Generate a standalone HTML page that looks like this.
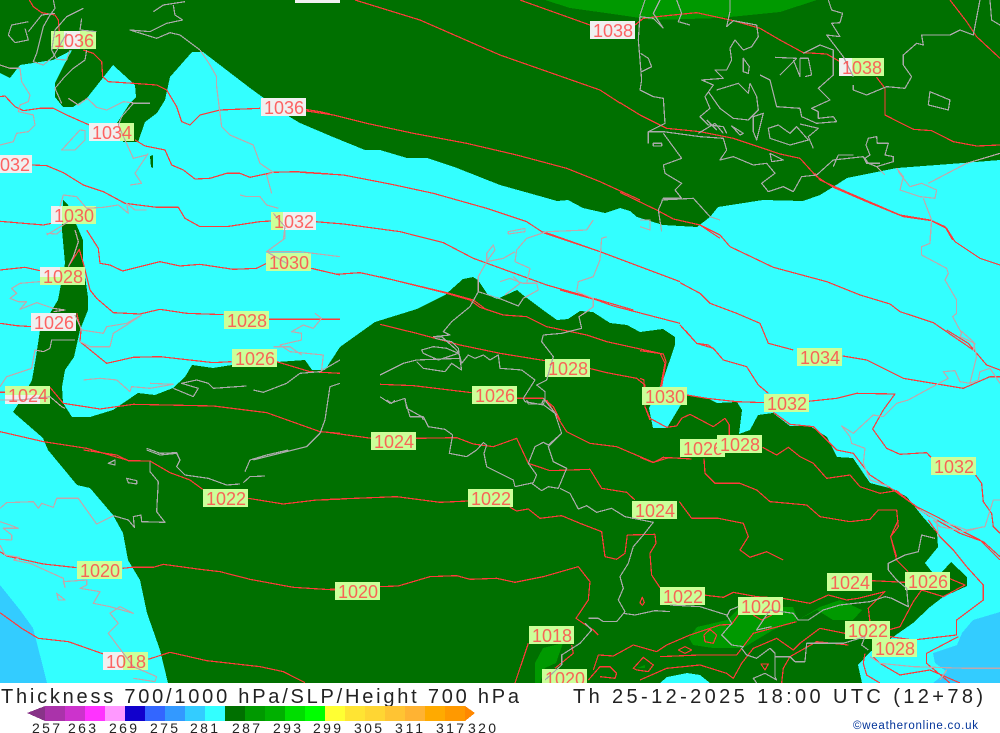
<!DOCTYPE html>
<html><head><meta charset="utf-8"><title>Thickness</title>
<style>
html,body{margin:0;padding:0;background:#fff;width:1000px;height:733px;overflow:hidden}
svg{display:block}
.r path{fill:none;stroke:#ff3a3a;stroke-width:3.6;stroke-linejoin:round}
.g path{fill:none;stroke:#aaa;stroke-width:3.6;stroke-linejoin:round}
.p path{fill:none;stroke:#c0a8ac;stroke-width:3.6;stroke-linejoin:round}
.l text{font-family:"Liberation Sans",sans-serif;font-size:18px;fill:#ff4a4a;fill-opacity:.85}
.t text{font-family:"Liberation Sans",sans-serif;font-size:20px;fill:#222}
.k text{font-family:"Liberation Sans",sans-serif;font-size:14px;fill:#222}
</style></head><body>
<svg width="1000" height="733" viewBox="0 0 1000 733" xmlns="http://www.w3.org/2000/svg">
<rect width="1000" height="733" fill="#fff"/>
<g shape-rendering="crispEdges">
<rect width="1000" height="683" fill="#33ffff"/>
<path fill="#33ccff" d="M0,585 L20,610 33,628 42,663 47,683 0,683Z"/>
<path fill="#33ccff" d="M1000,612 L973,620 962,633 957,645 933,653 935,663 947,672 933,683 1000,683Z"/>
<path fill="#007000" d="M0,0 L1000,0 1000,160 963,163 897,168 847,178 833,187 820,195 803,201 763,200 718,207 710,217 697,227 663,225 637,217 630,211 620,208 605,213 583,208 568,200 557,201 543,197 500,185 457,168 427,158 407,158 380,150 365,150 333,137 300,123 290,117 250,88 203,52 192,52 170,77 165,100 157,113 145,122 138,142 123,142 117,123 130,103 136,97 135,85 113,65 87,98 73,107 63,107 55,97 55,83 63,67 72,50 53,60 33,63 20,65 10,78 0,73Z"/>
<path fill="#007000" d="M150,156 L153,155 153,168 151,167Z"/>
<path fill="#009900" d="M545,0 L570,8 620,15 653,20 720,18 780,12 817,0Z"/>
<path fill="#007000" d="M63,200 L68,205 83,240 83,263 88,297 88,310 80,330 74,357 65,370 62,387 63,403 72,417 90,417 113,410 138,393 155,395 173,388 185,377 192,365 213,368 232,365 277,362 305,360 312,370 325,370 340,347 375,322 417,309 445,295 463,279 473,277 478,280 488,295 497,299 517,290 523,295 543,310 557,320 568,319 580,311 593,312 610,323 627,325 640,332 663,329 675,337 675,345 663,380 649,408 653,428 667,428 682,403 687,395 707,398 717,403 737,402 742,410 739,434 750,430 758,415 773,413 790,426 810,426 827,437 837,457 853,458 870,483 893,489 907,497 923,517 937,533 938,547 925,563 932,572 942,572 951,562 967,577 967,586 943,597 930,607 913,623 893,637 870,652 858,665 862,683 710,683 700,675 687,673 667,677 660,683 168,683 160,650 147,613 140,580 128,560 123,533 113,515 90,488 77,485 48,450 43,438 13,412 23,397 32,380 36,357 40,330 58,300 65,263 62,230Z"/>
<path fill="#009900" d="M535,683 L535,663 543,648 563,643 556,663 545,668 540,683Z"/>
<path fill="#009900" d="M689,638 L697,627 727,620 740,607 793,607 798,620 773,630 743,648 713,648 693,645Z"/>
<path fill="#009900" d="M798,620 L820,607 840,600 862,610 853,620 833,620 817,610Z"/>
<path fill="#009900" d="M637,668 L645,665 645,668Z"/>
</g>

<g shape-rendering="crispEdges">
<g class="r">
<path transform="scale(.3333)" d="M88,0 L100,20 125,38 165,45 175,60 178,95"/>
<path transform="scale(.3333)" d="M250,150 L280,160 305,185 308,230 325,245 400,250 470,255 500,270 530,320 545,365 570,375 600,345 660,330 780,325"/>
<path transform="scale(.3333)" d="M915,328 L960,335 990,342"/>
<path transform="scale(.3333)" d="M0,290 L15,288 45,320 70,332 120,325 160,325 200,345 268,375"/>
<path transform="scale(.3333)" d="M405,420 L435,438 495,450 515,495 550,510 585,537 630,535 680,520 720,520 750,532 820,517 890,515 990,522"/>
<path transform="scale(.3333)" d="M95,495 L140,497 190,518 250,555 310,575 375,610 470,622 535,622 555,655 600,680 680,680 780,665 815,663"/>
<path transform="scale(.3333)" d="M0,664 L130,675 155,670"/>
<path transform="scale(.3333)" d="M1065,0 L1260,60 1500,165 1800,270 1860,309 M1560,0 L1770,75"/>
<path transform="translate(300,90) scale(.3333)" d="M0,60 L100,75 200,100 340,130 500,160 650,195 800,235 900,275 1020,330"/>
<path transform="translate(300,90) scale(.3333)" d="M0,247 L130,255 270,282 400,310 560,355 680,395 730,428 900,485 1020,530"/>
<path transform="translate(300,90) scale(.3333)" d="M45,395 L130,402 300,425 430,458 520,505 630,545 740,585 880,625 1000,660"/>
<path transform="translate(300,90) scale(.3333)" d="M35,535 L110,553 180,548 280,570 440,608 520,630 560,660"/>
<path transform="translate(380,220) scale(.3333)" d="M490,35 L660,95 900,185"/>
<path transform="translate(380,220) scale(.3333)" d="M540,210 L650,240 700,258 900,310"/>
<path transform="translate(620,0) scale(.3333)" d="M45,75 L70,55 130,48 230,38 340,62 420,85 480,120 550,158 620,162 660,185"/>
<path transform="translate(620,0) scale(.3333)" d="M770,232 L795,265 795,345 880,388 935,392 1000,425 1070,438 1140,435"/>
<path transform="translate(620,0) scale(.3333)" d="M990,0 L1040,65 1070,110 1140,175"/>
<path transform="translate(620,0) scale(.3333)" d="M0,308 L60,345 140,385 240,395 340,415 480,462 540,475 590,530 640,562 740,605 850,650 935,662 975,680 998,720"/>
<path transform="translate(620,0) scale(.3333)" d="M0,577 L110,630 160,657 240,675 300,715"/>
<path transform="translate(680,130) scale(.3333)" d="M405,130 L420,150 505,188 660,255 750,270 800,295 825,335 900,385 960,405"/>
<path transform="translate(680,130) scale(.3333)" d="M60,285 L120,315 150,350 280,412 440,455 540,495 630,522 660,545 760,578 880,660"/>
<path transform="translate(680,130) scale(.3333)" d="M0,458 L60,490 90,520 170,550 240,580 265,640 340,660"/>
<path transform="translate(680,130) scale(.3333)" d="M0,585 L50,640 85,645 105,660"/>
<path transform="translate(640,330) scale(.3333)" d="M920,0 L985,40 1040,105 1080,120"/>
<path transform="translate(640,330) scale(.3333)" d="M608,78 L680,90 790,145 970,175 1050,140 1080,140"/>
<path transform="translate(640,330) scale(.3333)" d="M135,0 L170,40 220,55 250,90 320,110 355,165 385,190"/>
<path transform="translate(640,330) scale(.3333)" d="M0,62 L70,72 78,95 65,170"/>
<path transform="translate(640,330) scale(.3333)" d="M0,145 L12,150 15,230 30,265 80,292 110,288 125,265 150,253 220,290 255,265 268,285 268,315"/>
<path transform="translate(640,330) scale(.3333)" d="M140,195 L200,205 290,215 372,218"/>
<path transform="translate(640,330) scale(.3333)" d="M400,247 L450,283 520,290 590,360 640,370 690,435 760,480 830,530 890,560 970,605 1020,630 1080,690"/>
<path transform="translate(640,330) scale(.3333)" d="M505,214 L590,205 650,190 765,192 730,240 698,297 740,355 780,373 860,368 873,382"/>
<path transform="translate(640,330) scale(.3333)" d="M1005,433 L1025,460 1030,515 1055,550 1060,590 1080,610"/>
<path transform="translate(640,330) scale(.3333)" d="M368,352 L410,375 445,352 480,380 520,400 560,445 630,435 660,470 720,490 770,482 840,540 870,560"/>
<path transform="translate(640,330) scale(.3333)" d="M0,382 L40,398 70,382 155,387"/>
<path transform="translate(640,330) scale(.3333)" d="M192,385 L195,430 225,460 300,460 350,480 390,515 500,525 540,560 630,575 690,568 715,540 770,540 775,590 752,620 770,680"/>
<path transform="translate(640,330) scale(.3333)" d="M118,515 L155,565 235,565 310,580 325,620 300,660 330,682 380,665 430,690"/>
<path transform="translate(380,220) scale(.3333)" d="M0,170 L80,190 200,220 270,240 300,262 370,285 440,290 500,320 620,345 680,365 840,400 855,430 840,510"/>
<path transform="translate(380,220) scale(.3333)" d="M0,313 L110,340 240,375 360,400 495,422"/>
<path transform="translate(380,220) scale(.3333)" d="M627,445 L680,458 770,475 795,495 795,560 810,600"/>
<path transform="translate(380,220) scale(.3333)" d="M0,493 L100,497 275,518"/>
<path transform="translate(380,220) scale(.3333)" d="M410,535 L490,535 520,560 540,600"/>
<path transform="translate(0,230) scale(.3333)" d="M0,120 L75,112 120,122"/>
<path transform="translate(0,230) scale(.3333)" d="M260,0 L295,55 300,100 330,105 368,123 480,95 540,108 600,103 700,118 770,115 800,100"/>
<path transform="translate(0,230) scale(.3333)" d="M933,115 L1020,135"/>
<path transform="translate(0,230) scale(.3333)" d="M205,110 L238,58 250,100 270,180 290,205 340,248 420,252 480,238 560,250 670,254"/>
<path transform="translate(0,230) scale(.3333)" d="M805,268 L1020,268"/>
<path transform="translate(0,230) scale(.3333)" d="M0,280 L50,287 95,290"/>
<path transform="translate(0,230) scale(.3333)" d="M230,250 L243,300 240,335 320,400 400,382 480,380 640,398 695,395"/>
<path transform="translate(0,230) scale(.3333)" d="M830,395 L930,425 1020,430"/>
<path transform="translate(0,230) scale(.3333)" d="M0,487 L15,487 M150,472 L190,520 300,537 400,523 640,528 800,548 960,605 1020,610"/>
<path transform="translate(0,230) scale(.3333)" d="M0,605 L130,635 260,655 380,690"/>
<path transform="translate(0,450) scale(.3333)" d="M250,0 L350,15 385,32 450,33 510,68 570,90 608,118"/>
<path transform="translate(0,450) scale(.3333)" d="M745,145 L850,162 950,150 1020,148"/>
<path transform="translate(0,450) scale(.3333)" d="M0,305 L20,318 130,342 230,353"/>
<path transform="translate(0,450) scale(.3333)" d="M368,355 L395,352 460,352 490,343 600,358 660,365 750,388 880,412 1005,420"/>
<path transform="translate(0,450) scale(.3333)" d="M0,488 L65,535 115,565 205,575 310,612"/>
<path transform="translate(0,450) scale(.3333)" d="M445,628 L510,607 620,632 780,650 850,665 915,698"/>
<path transform="translate(330,400) scale(.3333)" d="M0,98 L125,115"/>
<path transform="translate(330,400) scale(.3333)" d="M258,115 L380,113 430,132 490,140 560,115 595,190 660,212 780,208 815,265 890,277 915,300"/>
<path transform="translate(330,400) scale(.3333)" d="M650,0 L710,95 780,130 860,140 970,187 1020,172"/>
<path transform="translate(330,400) scale(.3333)" d="M0,298 L200,290 330,307 415,303"/>
<path transform="translate(330,400) scale(.3333)" d="M540,322 L560,333 595,327 630,355 695,347 750,370 815,395 825,470 860,478 885,460 892,405 975,403 978,430 960,460 965,525 990,563"/>
<path transform="translate(330,400) scale(.3333)" d="M0,568 L15,568 M150,560 L205,558 300,530 380,527 420,538 500,535 555,547 640,530 745,500 780,545 775,600 738,655 790,690 805,705"/>
<path transform="translate(500,520) scale(.3333)" d="M1115,182 L1215,187"/>
<path transform="translate(500,520) scale(.3333)" d="M1347,175 L1395,195 1330,230 1265,210 1240,245 1200,320 1165,330"/>
<path transform="translate(500,520) scale(.3333)" d="M1195,0 L1172,50 1190,120 1225,155"/>
<path transform="translate(500,520) scale(.3333)" d="M610,225 L670,232 700,217 770,230 848,235 930,250 985,225 1040,240 1075,235 1155,215 1105,265 1110,305"/>
<path transform="translate(500,520) scale(.3333)" d="M85,370 L45,489"/>
<path transform="translate(500,520) scale(.3333)" d="M215,375 L220,400 165,445"/>
<path transform="translate(500,520) scale(.3333)" d="M265,480 L300,440 330,440 350,460 345,475 300,470"/>
<path transform="translate(500,520) scale(.3333)" d="M280,450 L295,405 340,408 400,375 470,395 500,375 570,345 660,315 695,313 715,285"/>
<path transform="translate(500,520) scale(.3333)" d="M760,285 L785,300 815,285"/>
<path transform="translate(500,520) scale(.3333)" d="M630,328 L650,345 640,370 615,365 612,345Z"/>
<path transform="translate(500,520) scale(.3333)" d="M535,390 L555,380 575,390 555,400Z"/>
<path transform="translate(500,520) scale(.3333)" d="M400,445 L430,412 460,435 445,455 410,450Z"/>
<path transform="translate(500,520) scale(.3333)" d="M783,432 L805,432 795,450Z"/>
<path transform="translate(500,520) scale(.3333)" d="M427,232 L433,247 427,256 420,248Z"/>
<path transform="translate(500,520) scale(.3333)" d="M420,480 L500,445 600,435 680,460 700,475 725,430 760,385 830,355 880,390 900,370 960,325 1035,340"/>
<path transform="translate(500,520) scale(.3333)" d="M845,489 L850,445 870,410 950,365 1045,375"/>
<path transform="translate(500,520) scale(.3333)" d="M480,410 L600,405 710,405 760,340 890,305"/>
<path transform="translate(500,520) scale(.3333)" d="M1095,400 L1090,430 1100,465 1140,489"/>
<path transform="translate(500,520) scale(.3333)" d="M1120,410 L1140,430 1200,465 1290,450 1380,489"/>
<path transform="translate(500,520) scale(.3333)" d="M1285,0 L1320,50 1360,90 1400,140 1450,195 1450,240 1370,300 1370,345 1240,360 1170,350"/>
<path transform="translate(500,520) scale(.3333)" d="M1310,0 L1380,40 1450,65 1500,110"/>
<path transform="translate(500,520) scale(.3333)" d="M1375,350 L1280,400 1280,430 1350,489"/>
</g>

<g>
<g fill="#ccff99">
<rect x="51" y="31" width="45" height="18"/><rect x="51" y="206" width="45" height="18"/><rect x="266" y="253" width="45" height="18"/>
<rect x="40" y="267" width="45" height="18"/><rect x="224" y="311" width="45" height="18"/><rect x="232" y="349" width="45" height="18"/>
<rect x="5" y="386" width="45" height="18"/><rect x="472" y="386" width="45" height="18"/><rect x="545" y="359" width="45" height="18"/>
<rect x="642" y="387" width="45" height="18"/><rect x="764" y="394" width="45" height="18"/><rect x="797" y="348" width="45" height="18"/>
<rect x="931" y="457" width="45" height="18"/><rect x="680" y="439" width="45" height="18"/><rect x="717" y="435" width="45" height="18"/>
<rect x="371" y="432" width="45" height="18"/><rect x="468" y="489" width="45" height="18"/><rect x="203" y="489" width="45" height="18"/>
<rect x="632" y="501" width="45" height="18"/><rect x="335" y="582" width="45" height="18"/><rect x="77" y="561" width="45" height="18"/>
<rect x="103" y="652" width="45" height="18"/><rect x="529" y="626" width="45" height="18"/><rect x="542" y="669" width="45" height="18"/>
<rect x="660" y="587" width="45" height="18"/><rect x="738" y="597" width="45" height="18"/><rect x="827" y="573" width="45" height="18"/>
<rect x="905" y="572" width="45" height="18"/><rect x="845" y="621" width="45" height="18"/><rect x="872" y="639" width="45" height="18"/>
<rect x="839" y="58" width="45" height="18"/><rect x="271" y="212" width="45" height="18"/><rect x="89" y="123" width="45" height="18"/>
</g>
<g fill="#f0f0f0">
<rect x="295" y="0" width="45" height="3"/><rect x="261" y="98" width="45" height="18"/><rect x="-13" y="155" width="45" height="18"/>
<rect x="590" y="21" width="45" height="18"/><rect x="31" y="313" width="45" height="18"/>
<rect x="64" y="31" width="16" height="18"/><rect x="51" y="206" width="11" height="18"/><rect x="283" y="212" width="33" height="18"/>
<rect x="40" y="267" width="20" height="10"/><rect x="5" y="395" width="35" height="9"/><rect x="103" y="652" width="20" height="18"/>
<rect x="839" y="58" width="13" height="18"/><rect x="89" y="123" width="31" height="18"/>
</g>
</g>

<g class="g">
<path transform="scale(.3333)" d="M160,0 L165,25 150,45 130,80 110,160 100,185 130,195 160,170 200,100"/>
<path transform="scale(.3333)" d="M85,95 L125,45 165,40 M250,25 L200,50 165,90 M85,65 L35,75 25,105 45,128 85,120 75,85"/>
<path transform="scale(.3333)" d="M245,55 L240,90 290,95 M165,90 L155,150 170,178 200,180 210,150"/>
<path transform="scale(.3333)" d="M260,150 L255,180 220,205 190,235 165,265 185,310"/>
<path transform="scale(.3333)" d="M450,310 L400,310 365,350 355,375"/>
<path transform="scale(.3333)" d="M460,35 L490,15 555,5 M520,15 L525,45 548,60 500,70 450,95 390,90 470,115 510,98 540,105 600,150"/>
<path transform="translate(620,0) scale(.3333)" d="M75,0 L60,45 55,120 65,240 60,270 100,290 130,295 135,370 85,395 85,430"/>
<path transform="translate(620,0) scale(.3333)" d="M62,160 L85,175 95,200 65,215"/>
<path transform="translate(620,0) scale(.3333)" d="M120,0 L100,40 130,85 M170,0 L185,40 175,65 210,75 M60,50 L100,55 130,85"/>
<path transform="translate(620,0) scale(.3333)" d="M330,0 L330,35 320,80 340,62 410,75 415,110 395,140 370,150 345,120 330,145 335,180 320,210 285,210 310,235 245,240 280,255 255,290 270,325 240,350 265,375 310,380 320,400"/>
<path transform="translate(620,0) scale(.3333)" d="M265,275 L300,325 340,355 385,360 415,330 410,290 390,250 385,280 355,250 290,270"/>
<path transform="translate(620,0) scale(.3333)" d="M370,175 L388,200 385,220 370,215Z"/>
<path transform="translate(620,0) scale(.3333)" d="M420,225 L450,240 470,320 540,325 545,350 590,370 650,365 640,350 595,355 595,335 575,325 630,300 595,265 640,225 640,150 600,135 550,160"/>
<path transform="translate(620,0) scale(.3333)" d="M465,172 L530,175 500,205 480,225 M520,180 L540,230 540,175 565,175 575,225 555,230"/>
<path transform="translate(620,0) scale(.3333)" d="M625,0 L635,30 668,40 660,68 635,70 660,110 620,105 670,170 700,230"/>
<path transform="translate(620,0) scale(.3333)" d="M400,350 L430,340 410,420 400,395Z M335,378 L370,400 360,405Z"/>
<path transform="translate(620,0) scale(.3333)" d="M445,385 L475,375 510,400 530,380 565,420 510,435 450,415Z M540,372 L595,385 565,410 580,445"/>
<path transform="translate(620,0) scale(.3333)" d="M85,395 L130,395 240,410 310,415 320,450 300,480 340,470 400,495 440,490 465,520 425,550 445,575 490,560 520,575 545,530 590,525 640,480 730,470 740,490 780,490"/>
<path transform="translate(620,0) scale(.3333)" d="M640,500 L655,465 700,465 M450,460 L490,480 455,485Z"/>
<path transform="translate(620,0) scale(.3333)" d="M130,400 L185,475 130,495 135,520 185,550 165,570 185,595 130,595 115,630 125,695"/>
<path transform="translate(620,0) scale(.3333)" d="M125,600 L220,595 270,650 300,660"/>
<path transform="translate(620,0) scale(.3333)" d="M700,255 L700,270 740,285 800,260 855,265 875,230 850,195 850,165 890,130 910,135 905,105 990,105 1020,90 1060,105 1080,0"/>
<path transform="translate(620,0) scale(.3333)" d="M1110,0 L1115,60 1140,75 M930,275 L990,300 985,330 925,315Z"/>
<path transform="translate(620,0) scale(.3333)" d="M745,415 L770,410 772,430 805,430 795,465 820,470 820,485 770,500 745,490 735,475 750,465 738,435Z"/>
<path transform="translate(620,0) scale(.3333)" d="M100,430 L125,430 125,438 100,438Z M235,400 L285,370 310,400 M260,360 L290,390"/>
<path transform="translate(380,220) scale(.3333)" d="M597,290 L605,325 545,340 490,345 485,365 520,410 500,480 470,495 495,515 495,535 490,555 435,545 430,535 465,480 425,450 360,445 355,405 330,420 310,405 285,415 265,405 245,430 240,410 230,390 185,350 160,350 210,345 190,335 215,305 270,260 295,215 365,238 415,258 430,235"/>
<path transform="translate(380,220) scale(.3333)" d="M165,355 L215,365 235,385 240,420 245,450 215,430 195,455 130,445 110,425"/>
<path transform="translate(380,220) scale(.3333)" d="M125,390 L160,380 200,385 235,400 175,420 130,400Z"/>
<path transform="translate(380,220) scale(.3333)" d="M0,465 L70,430 110,420 240,415"/>
<path transform="translate(380,220) scale(.3333)" d="M0,530 L30,550 75,535 80,565 125,590 130,600 M490,535 L530,585"/>
<path transform="translate(0,230) scale(.3333)" d="M150,355 L155,330 225,330 M520,475 L580,500 595,475 545,460 590,450 625,460 640,475 740,468"/>
<path transform="translate(0,230) scale(.3333)" d="M760,480 L790,487 860,460 900,430 960,425 1020,390"/>
<path transform="translate(0,230) scale(.3333)" d="M1020,460 L990,470 975,570 960,610 920,650 760,690"/>
<path transform="translate(0,230) scale(.3333)" d="M440,655 L480,670 530,668 540,690"/>
<path transform="translate(0,450) scale(.3333)" d="M440,0 L480,15 530,10 540,30 530,50 555,75 625,85 680,105 720,102 M730,98 L750,80 795,78 M735,65 L750,30 800,15 865,0"/>
<path transform="translate(0,450) scale(.3333)" d="M325,40 L345,30 345,45Z M380,85 L410,92 410,102 385,98Z"/>
<path transform="translate(0,450) scale(.3333)" d="M450,35 L450,65 475,95 470,185 495,217 425,215 423,195 400,200 403,232 385,210 340,197"/>
<path transform="translate(330,400) scale(.3333)" d="M170,0 L185,10 195,0"/>
<path transform="translate(330,400) scale(.3333)" d="M225,0 L240,50 280,50 295,80 345,88 368,105 358,160 410,170 440,150 460,128 470,135 462,160 470,200 550,240 555,260 610,248 620,225 595,190 615,140 640,127 655,135 695,100 655,140 670,185 710,205 685,265 655,260 635,272 605,250"/>
<path transform="translate(330,400) scale(.3333)" d="M590,0 L595,12 635,12 640,0 M635,10 L675,40 695,100"/>
<path transform="translate(330,400) scale(.3333)" d="M690,265 L720,280 745,327 770,317 800,337 845,325 885,350 970,367 940,405 910,440 895,490 870,530 880,565 865,600 885,635 860,665 820,665 805,655 775,655"/>
<path transform="translate(330,400) scale(.3333)" d="M880,640 L915,645 975,632 1020,635"/>
<path transform="translate(500,520) scale(.3333)" d="M255,310 L275,330 240,370 185,405 185,435 135,480"/>
<path transform="translate(500,520) scale(.3333)" d="M510,255 L600,260 680,285 695,310 665,345 695,375 730,380 725,385 740,405 770,415 810,385 825,400 825,470 830,480 795,460 760,475 770,489"/>
<path transform="translate(500,520) scale(.3333)" d="M825,410 L870,410 885,425 915,425 920,370 1030,370 1095,350 1085,375 1105,390"/>
<path transform="translate(500,520) scale(.3333)" d="M1305,55 L1265,45 1255,95 1215,105 1165,130 1165,150 1190,180 1220,205 1225,260 1175,235 1155,230 1110,245 1020,255 970,270 925,300 895,300 880,280 810,270 770,330 815,320"/>
<path transform="translate(500,520) scale(.3333)" d="M680,290 L690,270 715,260"/>
</g>
<g class="p">
<path transform="scale(.3333)" d="M0,195 L30,205 60,205 65,245 90,285 85,305 60,315 55,335 100,345 105,375 85,395 50,400 40,425 0,435"/>
<path transform="scale(.3333)" d="M205,295 L235,315 262,295 290,322 320,330 370,305 410,310"/>
<path transform="scale(.3333)" d="M355,375 L375,420 400,475 440,465"/>
<path transform="scale(.3333)" d="M600,150 L630,195 650,230 650,260 665,380 690,405 760,435 780,490 820,517 800,525 815,580"/>
<path transform="scale(.3333)" d="M720,585 L740,590 780,590 800,615 835,625 M240,390 L185,450 225,450 255,420 255,392Z"/>
<path transform="scale(.3333)" d="M180,620 L190,585 230,590 260,625 310,622 355,615 385,640 380,610 405,630 440,630 M140,705 L190,675 210,660"/>
<path transform="scale(.3333)" d="M390,555 L425,550 405,520 445,460 M820,640 L855,680 850,720"/>
<path transform="translate(620,0) scale(.3333)" d="M770,500 L795,525 M830,505 L850,530 840,570 900,590 945,595 950,570 905,550 870,560 835,515 M1140,460 L1040,490 925,550 M910,595 L935,660 930,720 M60,660 L90,660 90,690 60,680"/>
<path transform="translate(680,130) scale(.3333)" d="M730,205 L755,270 750,340 725,350 725,375 800,415 805,430 795,450 830,510 830,550 818,560 845,610 840,620 885,640 880,660"/>
<path transform="translate(640,330) scale(.3333)" d="M1080,160 L1050,115 1020,125 1015,150 990,160 960,155 945,122 910,125 925,145 860,180 805,210 770,220 730,260 700,255 640,310 605,288 630,320 635,340 675,355 670,400 690,450 750,470"/>
<path transform="translate(640,330) scale(.3333)" d="M960,0 L1000,35 1010,80 990,160 M830,535 L890,570 895,620 M1080,510 L1060,510 1035,590 980,600 910,575"/>
<path transform="translate(380,220) scale(.3333)" d="M640,0 L620,30 500,35 440,55 410,90 405,125 450,145 440,190 470,190 475,210 430,235"/>
<path transform="translate(380,220) scale(.3333)" d="M295,215 L295,170 320,125 345,90 340,75 320,100 320,125 370,115 405,95"/>
<path transform="translate(380,220) scale(.3333)" d="M385,35 L435,25 435,35 385,42Z"/>
<path transform="translate(380,220) scale(.3333)" d="M680,50 L665,55 660,120 640,170 595,185 590,215 640,235 640,260 620,275 597,290"/>
<path transform="translate(380,220) scale(.3333)" d="M360,185 L390,175 415,185 430,190 470,190 M400,170 L420,190 375,225"/>
<path transform="translate(0,230) scale(.3333)" d="M225,0 L235,35 220,80 205,110 M140,10 L170,12 185,0 M855,0 L855,25 800,65 860,100 M800,65 L900,65 1020,80"/>
<path transform="translate(0,230) scale(.3333)" d="M120,155 L60,160 35,175 50,190 30,205 55,215 80,215 60,238 110,218 160,235 195,240 160,245"/>
<path transform="translate(0,230) scale(.3333)" d="M225,255 L245,300 310,310 320,290 380,280 425,255 380,285 340,310 330,350 270,350 240,335"/>
<path transform="translate(0,230) scale(.3333)" d="M150,355 L130,365 105,360 95,415 20,440 0,470 M0,510 L60,510 150,500 185,530 195,535"/>
<path transform="translate(0,230) scale(.3333)" d="M250,450 L300,445 350,450 390,485 395,470 450,475 520,463 450,460"/>
<path transform="translate(0,230) scale(.3333)" d="M945,250 L965,265 940,295 910,285 875,305 905,310 905,330 840,345 870,365 970,375 965,420 M820,350 L870,350 905,375"/>
<path transform="translate(0,450) scale(.3333)" d="M340,197 L290,222 235,145 170,145 160,172 125,160 115,175 100,155 20,158 0,175"/>
<path transform="translate(0,450) scale(.3333)" d="M0,215 L30,225 55,235 10,235 35,255 35,270 0,268"/>
<path transform="translate(0,450) scale(.3333)" d="M0,285 L15,315 60,322 40,330 90,340 190,385 195,412 190,395 260,390 260,405 240,415 300,425 280,460 330,470 400,490 360,470 330,490 355,520 325,550 370,610 400,650 470,680 465,695 400,685"/>
<path transform="translate(0,450) scale(.3333)" d="M170,430 L195,450 175,450Z"/>
<path transform="translate(500,520) scale(.3333)" d="M1300,0 L1320,20 1395,35 1450,20 M1110,410 L1140,430 1240,440 1400,445 1500,445 M1340,450 L1320,480"/>
</g>
</g>

<g class="l">
<text x="54" y="47" textLength="40" lengthAdjust="spacing">1036</text>
<text x="264" y="114" textLength="40" lengthAdjust="spacing">1036</text>
<text x="92" y="139" textLength="40" lengthAdjust="spacing">1034</text>
<text x="-10" y="171" textLength="40" lengthAdjust="spacing">1032</text>
<text x="54" y="222" textLength="40" lengthAdjust="spacing">1030</text>
<text x="274" y="228" textLength="40" lengthAdjust="spacing">1032</text>
<text x="269" y="269" textLength="40" lengthAdjust="spacing">1030</text>
<text x="43" y="283" textLength="40" lengthAdjust="spacing">1028</text>
<text x="227" y="327" textLength="40" lengthAdjust="spacing">1028</text>
<text x="34" y="329" textLength="40" lengthAdjust="spacing">1026</text>
<text x="235" y="365" textLength="40" lengthAdjust="spacing">1026</text>
<text x="8" y="402" textLength="40" lengthAdjust="spacing">1024</text>
<text x="475" y="402" textLength="40" lengthAdjust="spacing">1026</text>
<text x="548" y="375" textLength="40" lengthAdjust="spacing">1028</text>
<text x="645" y="403" textLength="40" lengthAdjust="spacing">1030</text>
<text x="767" y="410" textLength="40" lengthAdjust="spacing">1032</text>
<text x="800" y="364" textLength="40" lengthAdjust="spacing">1034</text>
<text x="934" y="473" textLength="40" lengthAdjust="spacing">1032</text>
<text x="683" y="455" textLength="40" lengthAdjust="spacing">1026</text>
<rect x="717" y="435" width="45" height="18" fill="#ccff99"/>
<text x="720" y="451" textLength="40" lengthAdjust="spacing">1028</text>
<text x="374" y="448" textLength="40" lengthAdjust="spacing">1024</text>
<text x="471" y="505" textLength="40" lengthAdjust="spacing">1022</text>
<text x="206" y="505" textLength="40" lengthAdjust="spacing">1022</text>
<text x="635" y="517" textLength="40" lengthAdjust="spacing">1024</text>
<text x="338" y="598" textLength="40" lengthAdjust="spacing">1020</text>
<text x="80" y="577" textLength="40" lengthAdjust="spacing">1020</text>
<text x="106" y="668" textLength="40" lengthAdjust="spacing">1018</text>
<text x="532" y="642" textLength="40" lengthAdjust="spacing">1018</text>
<text x="545" y="685" textLength="40" lengthAdjust="spacing">1020</text>
<text x="663" y="603" textLength="40" lengthAdjust="spacing">1022</text>
<text x="741" y="613" textLength="40" lengthAdjust="spacing">1020</text>
<text x="830" y="589" textLength="40" lengthAdjust="spacing">1024</text>
<text x="908" y="588" textLength="40" lengthAdjust="spacing">1026</text>
<text x="848" y="637" textLength="40" lengthAdjust="spacing">1022</text>
<text x="875" y="655" textLength="40" lengthAdjust="spacing">1028</text>
<text x="842" y="74" textLength="40" lengthAdjust="spacing">1038</text>
<text x="593" y="37" textLength="40" lengthAdjust="spacing">1038</text>
</g>

<rect x="0" y="683" width="1000" height="50" fill="#fff"/>
<g class="t">
<text x="1" y="703" textLength="518" lengthAdjust="spacing">Thickness 700/1000 hPa/SLP/Height 700 hPa</text>
<text x="573" y="703" textLength="410" lengthAdjust="spacing">Th 25-12-2025 18:00 UTC (12+78)</text>
</g>
<g shape-rendering="crispEdges">
<path fill="#883388" d="M27,713 L45,706 45,721Z"/>
<path fill="#ff8800" d="M465,706 L475,713 465,721Z"/>
<rect x="45" y="706" width="20" height="15" fill="#aa33aa"/>
<rect x="65" y="706" width="20" height="15" fill="#cc33cc"/>
<rect x="85" y="706" width="20" height="15" fill="#ff33ff"/>
<rect x="105" y="706" width="20" height="15" fill="#ff99ff"/>
<rect x="125" y="706" width="20" height="15" fill="#1100cc"/>
<rect x="145" y="706" width="20" height="15" fill="#3366ff"/>
<rect x="165" y="706" width="20" height="15" fill="#3399ff"/>
<rect x="185" y="706" width="20" height="15" fill="#33ccff"/>
<rect x="205" y="706" width="20" height="15" fill="#33ffff"/>
<rect x="225" y="706" width="20" height="15" fill="#007000"/>
<rect x="245" y="706" width="20" height="15" fill="#009900"/>
<rect x="265" y="706" width="20" height="15" fill="#00b000"/>
<rect x="285" y="706" width="20" height="15" fill="#00dd00"/>
<rect x="305" y="706" width="20" height="15" fill="#00ff00"/>
<rect x="325" y="706" width="20" height="15" fill="#ffff33"/>
<rect x="345" y="706" width="20" height="15" fill="#ffe433"/>
<rect x="365" y="706" width="20" height="15" fill="#ffd633"/>
<rect x="385" y="706" width="20" height="15" fill="#ffc433"/>
<rect x="405" y="706" width="20" height="15" fill="#ffb333"/>
<rect x="425" y="706" width="20" height="15" fill="#ffaa00"/>
<rect x="445" y="706" width="20" height="15" fill="#ff9900"/>
</g>
<g class="k">
<text x="32" y="733" textLength="28" lengthAdjust="spacing">257</text>
<text x="68" y="733" textLength="28" lengthAdjust="spacing">263</text>
<text x="109" y="733" textLength="28" lengthAdjust="spacing">269</text>
<text x="150" y="733" textLength="28" lengthAdjust="spacing">275</text>
<text x="190" y="733" textLength="28" lengthAdjust="spacing">281</text>
<text x="232" y="733" textLength="28" lengthAdjust="spacing">287</text>
<text x="273" y="733" textLength="28" lengthAdjust="spacing">293</text>
<text x="313" y="733" textLength="28" lengthAdjust="spacing">299</text>
<text x="354" y="733" textLength="28" lengthAdjust="spacing">305</text>
<text x="395" y="733" textLength="28" lengthAdjust="spacing">311</text>
<text x="436" y="733" textLength="28" lengthAdjust="spacing">317</text>
<text x="468" y="733" textLength="28" lengthAdjust="spacing">320</text>
</g>
<text x="853" y="729" font-family="'Liberation Sans',sans-serif" font-size="11.5" fill="#003399" textLength="125" lengthAdjust="spacing">©weatheronline.co.uk</text>
</svg>
</body></html>
